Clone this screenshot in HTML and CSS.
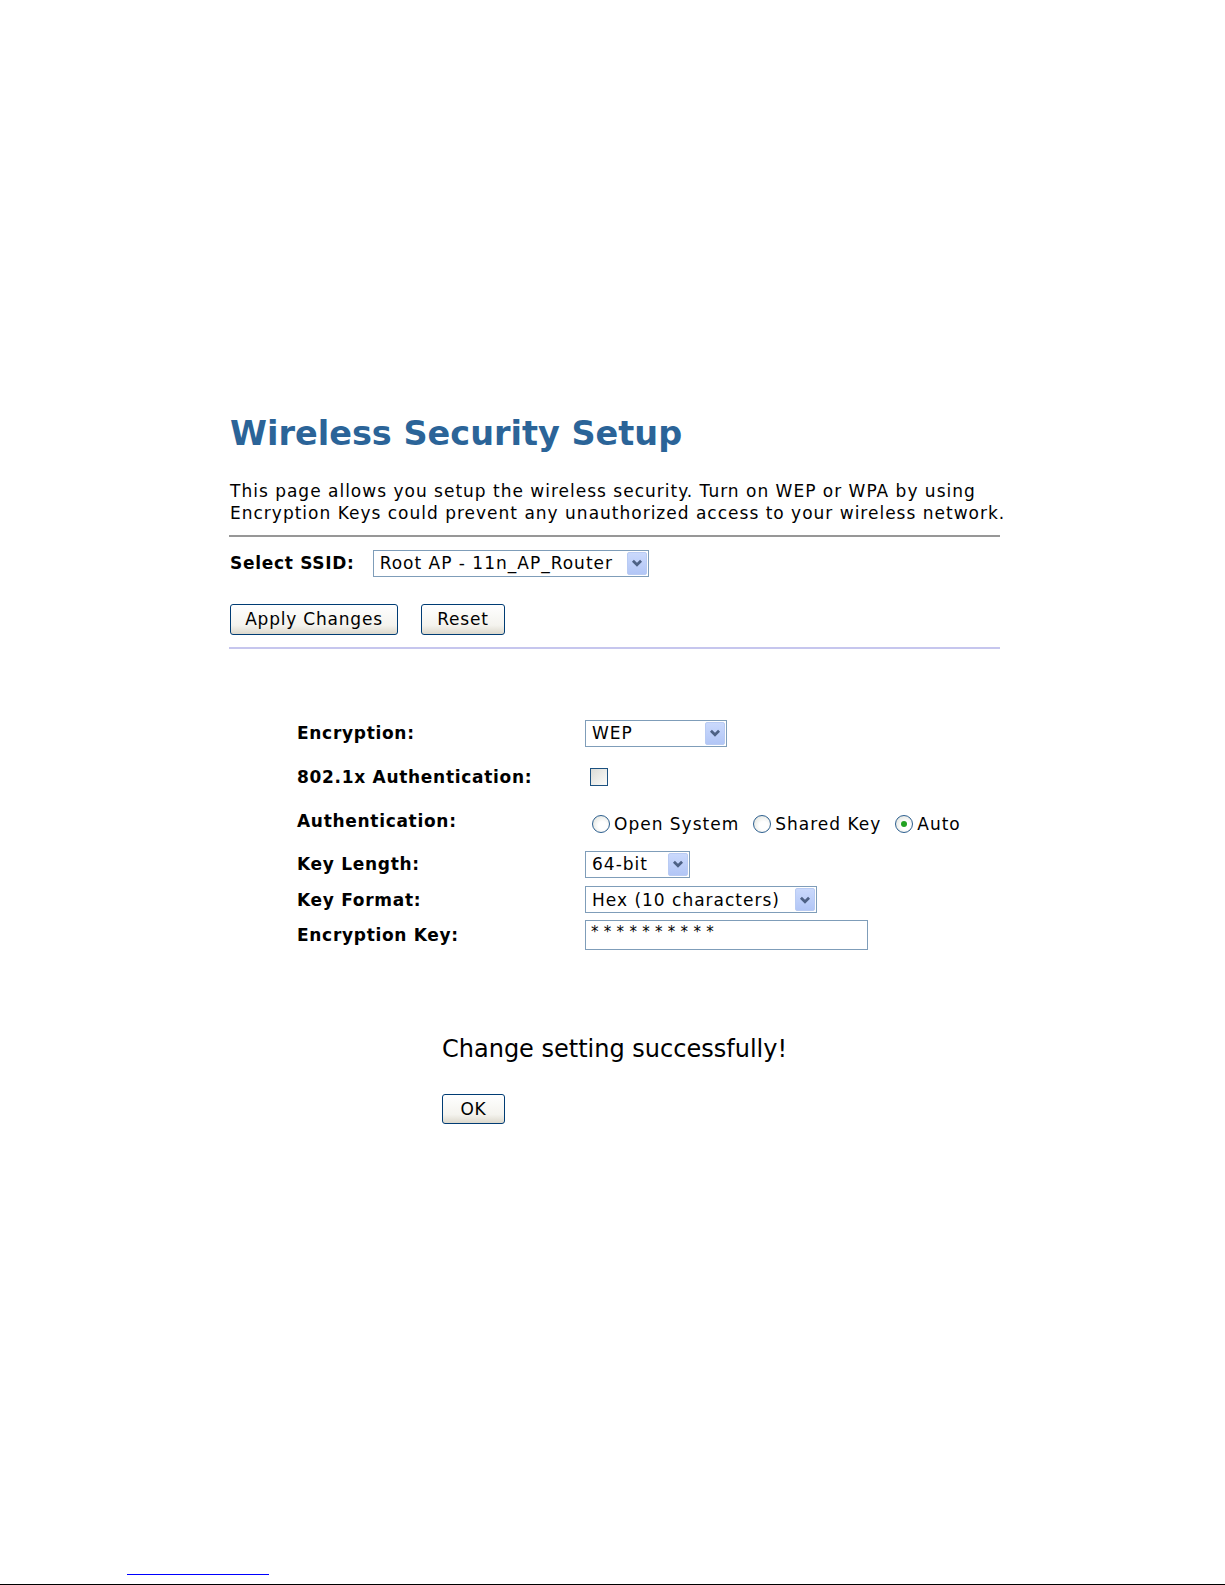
FILE: index.html
```html
<!DOCTYPE html>
<html>
<head>
  <link rel="stylesheet" href="styles.css">
</head>

<body>
  <div class="page">
    <h1 class="title">Wireless Security Setup</h1>
    <p class="intro">This page allows you setup the wireless security. Turn on WEP or WPA by using<br>Encryption Keys could prevent any unauthorized access to your wireless network.</p>
    <hr class="rule">

    <div class="ssid-row">
      <span class="ssid-label">Select SSID:</span>
      <div class="select select-ssid">
        <span class="select-value">Root AP - 11n_AP_Router</span>
        <span class="select-arrow"><svg viewBox="0 0 20 22" width="20" height="22"><path d="M5.5 8.5l4.5 4.5 4.5-4.5" fill="none" stroke="#4d6185" stroke-width="3"/></svg></span>
      </div>
    </div>

    <div class="actions">
      <button class="btn btn-apply">Apply Changes</button>
      <button class="btn btn-reset">Reset</button>
    </div>
    <hr class="rule rule-light">

    <div class="settings">
      <div class="label">Encryption:</div>
      <div class="field">
        <div class="select select-enc">
          <span class="select-value">WEP</span>
          <span class="select-arrow"><svg viewBox="0 0 20 22" width="20" height="22"><path d="M5.5 8.5l4.5 4.5 4.5-4.5" fill="none" stroke="#4d6185" stroke-width="3"/></svg></span>
        </div>
      </div>

      <div class="label">802.1x Authentication:</div>
      <div class="field"><span class="checkbox"></span></div>

      <div class="label">Authentication:</div>
      <div class="field radios">
        <span class="radio"></span><span class="radio-text">Open System</span>
        <span class="radio"></span><span class="radio-text">Shared Key</span>
        <span class="radio radio-on"></span><span class="radio-text">Auto</span>
      </div>

      <div class="label">Key Length:</div>
      <div class="field">
        <div class="select select-len">
          <span class="select-value">64-bit</span>
          <span class="select-arrow"><svg viewBox="0 0 20 22" width="20" height="22"><path d="M5.5 8.5l4.5 4.5 4.5-4.5" fill="none" stroke="#4d6185" stroke-width="3"/></svg></span>
        </div>
      </div>

      <div class="label">Key Format:</div>
      <div class="field">
        <div class="select select-fmt">
          <span class="select-value">Hex (10 characters)</span>
          <span class="select-arrow"><svg viewBox="0 0 20 22" width="20" height="22"><path d="M5.5 8.5l4.5 4.5 4.5-4.5" fill="none" stroke="#4d6185" stroke-width="3"/></svg></span>
        </div>
      </div>

      <div class="label">Encryption Key:</div>
      <div class="field"><div class="textbox">**********</div></div>
    </div>

    <div class="notice">
      <p class="notice-text">Change setting successfully!</p>
      <button class="btn btn-ok">OK</button>
    </div>
  </div>

  <footer class="foot">
    <span class="foot-link"></span>
  </footer>
</body>

</html>
```

FILE: styles.css
```css
:root {
  --text-color: #000;
  --title-color: #2b6498;
  --field-border: #7f9db9;
  --button-border: #003c74;
  --font: "DejaVu Sans", Verdana, sans-serif;
}

html,
body {
  margin: 0;
  padding: 0;
}

body {
  font-family: var(--font);
  font-size: 17px;
  letter-spacing: 1px;
  color: var(--text-color);
  background: #fff;
  min-height: 1585px;
  display: flex;
  flex-direction: column;
}

.page {
  padding: 414px 0 0 230px;
  width: 770px;
}

.title {
  margin: 0;
  font-size: 33.5px;
  line-height: 40px;
  font-weight: bold;
  letter-spacing: 0;
  color: var(--title-color);
}

.intro {
  margin: 26px 0 0;
  line-height: 22px;
  white-space: nowrap;
}

.rule {
  margin: 11px 0 0 -1px;
  height: 0;
  border: none;
  border-top: 2px solid #979797;
}

.rule-light {
  margin-top: 12.5px;
  border-top-color: #c6c6ee;
}

.ssid-row {
  margin-top: 12.5px;
  display: flex;
  align-items: center;
  gap: 18px;
  height: 27px;
}

.ssid-label,
.label {
  font-weight: bold;
  letter-spacing: 0.7px;
}

/* drop-down boxes, drawn like the old XP controls */
.select {
  box-sizing: border-box;
  height: 27px;
  border: 1px solid var(--field-border);
  display: flex;
  align-items: center;
  justify-content: space-between;
  padding: 1px 1px 1px 6px;
  background: #fff;
}

.select-value {
  line-height: 22px;
  white-space: nowrap;
}

.select-arrow {
  width: 20px;
  height: 23px;
  box-sizing: border-box;
  border: 1px solid #b9cbf3;
  border-radius: 2px;
  background: linear-gradient(#cad9fc, #b2c6f6);
  display: flex;
  align-items: center;
  justify-content: center;
}

.select-arrow svg {
  display: block;
}

.select-ssid { width: 276px; }
.select-enc { width: 142px; }
.select-len { width: 105px; }
.select-fmt { width: 232px; }

.actions {
  margin-top: 27px;
  display: flex;
  gap: 23px;
}

.btn {
  box-sizing: border-box;
  height: 31px;
  padding: 0;
  font-family: var(--font);
  font-size: 17px;
  letter-spacing: 0.8px;
  color: #000;
  border: 1px solid var(--button-border);
  border-radius: 3px;
  background: linear-gradient(#ffffff, #f4f3ee 70%, #dcd8cc);
}

.btn-apply { width: 168px; }
.btn-reset { width: 84px; }

.settings {
  margin: 62px 0 0 67px;
  display: grid;
  grid-template-columns: 288px auto;
  grid-template-rows: 44px 43px 46px 40px 31px 39px;
  align-items: center;
}

.field {
  display: flex;
  align-items: center;
}

.checkbox {
  box-sizing: border-box;
  width: 18px;
  height: 18px;
  margin-left: 5px;
  border: 1px solid #1c5180;
  background: linear-gradient(135deg, #dcdcd7, #fbfbf9);
}

.radios {
  padding-top: 5px;
}

.radio {
  box-sizing: border-box;
  width: 18px;
  height: 18px;
  margin-left: 7px;
  border-radius: 50%;
  border: 1px solid #2d5f8f;
  background: radial-gradient(circle at 60% 60%, #fff 30%, #d9dcd4 100%);
  display: inline-flex;
  align-items: center;
  justify-content: center;
}

.radio + .radio-text + .radio {
  margin-left: 14px;
}

.radio-on::after {
  content: "";
  width: 6px;
  height: 6px;
  border-radius: 50%;
  background: #21a121;
}

.radio-text {
  margin-left: 4px;
}

.textbox {
  box-sizing: border-box;
  width: 283px;
  height: 30px;
  border: 1px solid var(--field-border);
  padding: 0 5px;
  line-height: 22px;
  font-size: 15px;
  letter-spacing: 5.3px;
}

.notice {
  margin: 80px 0 0 212px;
}

.notice-text {
  margin: 0;
  font-size: 24px;
  line-height: 30px;
  letter-spacing: 0;
}

.btn-ok {
  margin-top: 30px;
  width: 63px;
  height: 30px;
}

.foot {
  margin-top: auto;
  height: 11px;
  border-bottom: 1px solid #000;
  box-sizing: border-box;
}

.foot-link {
  display: block;
  margin-left: 127px;
  width: 142px;
  border-top: 1px solid #0000ff;
}
```
